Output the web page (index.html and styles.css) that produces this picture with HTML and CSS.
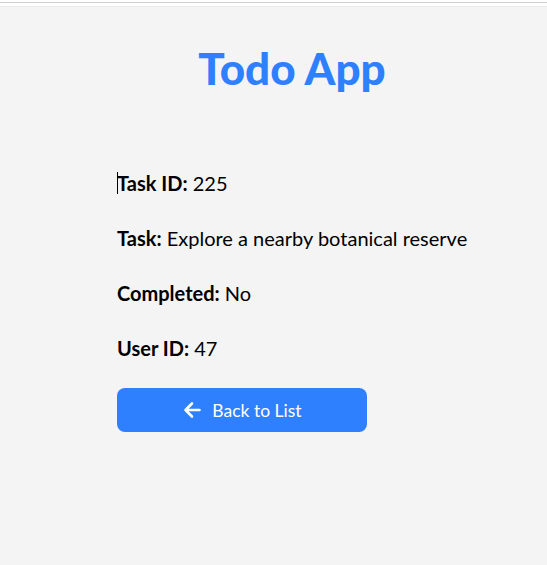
FILE: index.html
```html
<!DOCTYPE html>
<html>
<head>
<meta charset="utf-8">
<link rel="stylesheet" href="styles.css">
</head>
<body>
<div class="topbar"></div>
<main class="page">
  <div class="container">
    <h1 class="title">Todo App</h1>
    <div class="details">
      <p class="row"><span class="caret"></span><strong>Task ID:</strong> 225</p>
      <p class="row"><strong>Task:</strong> Explore a nearby botanical reserve</p>
      <p class="row"><strong>Completed:</strong> No</p>
      <p class="row"><strong>User ID:</strong> 47</p>
    </div>
    <button class="back">
      <svg class="arrow" viewBox="0 0 20 20" width="20" height="20"><path d="M17.5 10H3.5M10 3.5L3.5 10 10 16.5" fill="none" stroke="#fff" stroke-width="2.6" stroke-linecap="round" stroke-linejoin="round"/></svg>
      <span>Back to List</span>
    </button>
  </div>
</main>
</body>
</html>
```
FILE: styles.css
```css
html, body {
  margin: 0;
  padding: 0;
  background: #f4f4f4;
  font-family: Lato, "Liberation Sans", sans-serif;
  color: #000;
}
.topbar {
  height: 0;
  border-top: 2px solid #fff;
  border-bottom: 1px solid #eaeaea;
  padding-top: 1px;
  padding-bottom: 3px;
  background: linear-gradient(#cfcfcf 0 1px, #fff 1px);
  background-clip: padding-box;
}
.page {
  padding-left: 117px;
}
.container {
  width: 350px;
  display: flex;
  flex-direction: column;
}
.title {
  margin: 31px 0 0;
  text-align: center;
  font-size: 44px;
  font-weight: 900;
  color: #2f80fe;
  line-height: 60px;
}
.details {
  margin-top: 73px;
  display: flex;
  flex-direction: column;
  gap: 31px;
}
.row {
  position: relative;
  margin: 0;
  font-size: 20px;
  line-height: 24px;
  white-space: nowrap;
}
.caret {
  position: absolute;
  left: 0;
  top: 1px;
  width: 1px;
  height: 22px;
  background: #000;
}
.back {
  margin-top: 28px;
  width: 250px;
  height: 44px;
  border: none;
  border-radius: 8px;
  background: #2f80fe;
  color: #fff;
  font-family: Lato, "Liberation Sans", sans-serif;
  font-size: 17.5px;
  display: flex;
  align-items: center;
  justify-content: center;
  gap: 10px;
  padding: 0;
}
.arrow {
  display: block;
}
```
